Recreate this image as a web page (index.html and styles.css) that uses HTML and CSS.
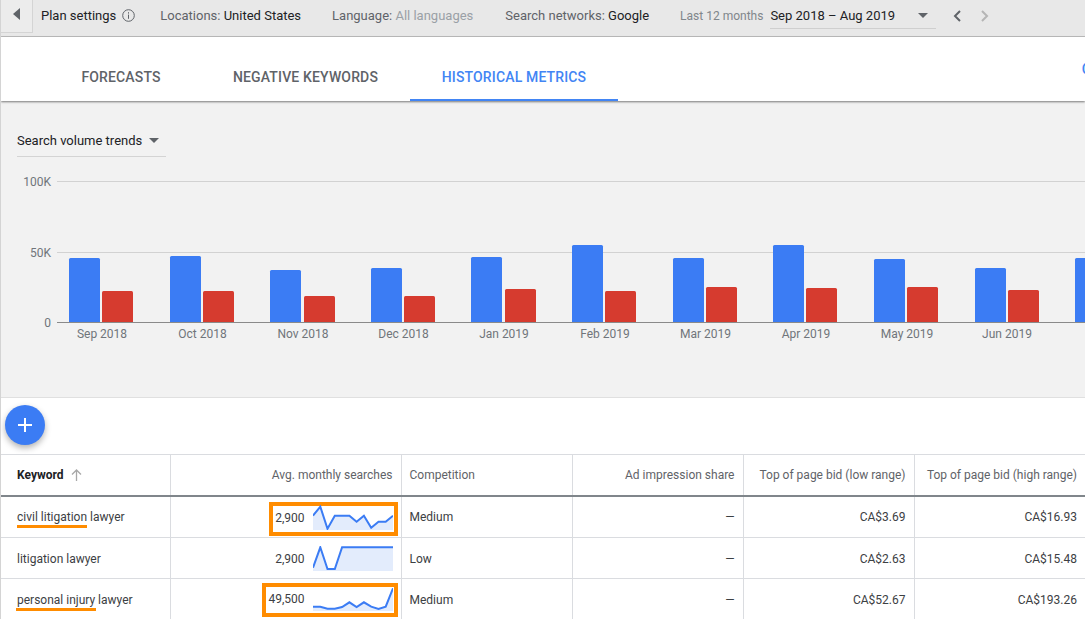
FILE: index.html
```html
<!DOCTYPE html>
<html lang="en">
<head>
  <meta charset="UTF-8">
  <meta name="viewport" content="width=device-width, initial-scale=1.0">
  <title>Historical metrics</title>
  <link rel="stylesheet" href="styles.css">
</head>
<body>
  <div class="page">
    <header class="settings-bar">
      <button class="back-btn" aria-label="Back">
        <svg width="7" height="12" viewBox="0 0 7 12"><path d="M7 0v12L0 6z" fill="#5f6368"/></svg>
      </button>
      <div class="plan-settings">
        <span>Plan settings</span>
        <svg width="13" height="13" viewBox="0 0 13 13" fill="none" stroke="#5f6368"><circle cx="6.5" cy="6.5" r="5.8"/><path d="M6.5 5.6v4.2M6.5 3.200v1.400"/></svg>
      </div>
      <div class="setting setting-loc">Locations: <b>United States</b></div>
      <div class="setting setting-lang">Language: <i>All languages</i></div>
      <div class="setting setting-net">Search networks: <b>Google</b></div>
      <div class="setting setting-range">Last 12 months</div>
      <div class="range-select">
        <span>Sep 2018 – Aug 2019</span>
        <span class="caret"></span>
      </div>
      <div class="pager">
        <svg width="8" height="12" viewBox="0 0 8 12" fill="none" stroke="#5f6368" stroke-width="2"><path d="M7 1L2 6l5 5"/></svg>
        <svg width="8" height="12" viewBox="0 0 8 12" fill="none" stroke="#b5b5b5" stroke-width="2"><path d="M1 1l5 5-5 5"/></svg>
      </div>
    </header>

    <nav class="tabs">
      <a class="tab tab-forecasts">FORECASTS</a>
      <a class="tab tab-negative">NEGATIVE KEYWORDS</a>
      <a class="tab tab-active">HISTORICAL METRICS</a>
      <a class="tab-action">C</a>
    </nav>

    <section class="chart-panel">
      <div class="trend-select">
        <span>Search volume trends</span>
        <span class="caret"></span>
      </div>
      <svg class="chart" width="1084" height="180" viewBox="0 0 1084 180">
        <g class="grid">
          <line x1="56" x2="1084" y1="9.5" y2="9.5"/>
          <line x1="56" x2="1084" y1="80.5" y2="80.5"/>
        </g>
        <g class="y-labels">
          <text x="50" y="14">100K</text>
          <text x="50" y="85">50K</text>
          <text x="50" y="155">0</text>
        </g>
        <g class="bars-blue">
          <rect x="68" y="86" width="31" height="65" rx="1.500"/>
          <rect x="169" y="84" width="31" height="67" rx="1.500"/>
          <rect x="269" y="98" width="31" height="53" rx="1.500"/>
          <rect x="370" y="96" width="31" height="55" rx="1.500"/>
          <rect x="470" y="85" width="31" height="66" rx="1.500"/>
          <rect x="571" y="73" width="31" height="78" rx="1.500"/>
          <rect x="672" y="86" width="31" height="65" rx="1.500"/>
          <rect x="772" y="73" width="31" height="78" rx="1.500"/>
          <rect x="873" y="87" width="31" height="64" rx="1.500"/>
          <rect x="974" y="96" width="31" height="55" rx="1.500"/>
          <rect x="1074" y="86" width="31" height="65" rx="1.500"/>
        </g>
        <g class="bars-red">
          <rect x="101" y="119" width="31" height="32" rx="1.500"/>
          <rect x="202" y="119" width="31" height="32" rx="1.500"/>
          <rect x="303" y="124" width="31" height="27" rx="1.500"/>
          <rect x="403" y="124" width="31" height="27" rx="1.500"/>
          <rect x="504" y="117" width="31" height="34" rx="1.500"/>
          <rect x="604" y="119" width="31" height="32" rx="1.500"/>
          <rect x="705" y="115" width="31" height="36" rx="1.500"/>
          <rect x="805" y="116" width="31" height="35" rx="1.500"/>
          <rect x="906" y="115" width="31" height="36" rx="1.500"/>
          <rect x="1007" y="118" width="31" height="33" rx="1.500"/>
        </g>
        <line class="axis" x1="56" x2="1084" y1="150.5" y2="150.5"/>
        <g class="x-labels">
          <text x="101" y="166">Sep 2018</text>
          <text x="201.500" y="166">Oct 2018</text>
          <text x="302" y="166">Nov 2018</text>
          <text x="402.500" y="166">Dec 2018</text>
          <text x="503" y="166">Jan 2019</text>
          <text x="604" y="166">Feb 2019</text>
          <text x="704.500" y="166">Mar 2019</text>
          <text x="805" y="166">Apr 2019</text>
          <text x="906" y="166">May 2019</text>
          <text x="1006" y="166">Jun 2019</text>
        </g>
      </svg>
    </section>

    <div class="fab-row">
      <button class="fab" aria-label="Add">
        <svg width="14" height="14" viewBox="0 0 14 14"><path d="M6 0h2v6h6v2H8v6H6V8H0V6h6z" fill="#fff"/></svg>
      </button>
    </div>

    <table class="metrics">
      <colgroup>
        <col class="col-keyword"><col class="col-searches"><col class="col-comp">
        <col class="col-share"><col class="col-low"><col class="col-high">
      </colgroup>
      <thead>
        <tr>
          <th class="th-keyword">Keyword
            <svg width="11" height="12" viewBox="0 0 11 12" fill="none" stroke="#a8a8a8" stroke-width="1.300"><path d="M5.500 12V1M1 5.500l4.500-4.500 4.500 4.500"/></svg>
          </th>
          <th class="num">Avg. monthly searches</th>
          <th>Competition</th>
          <th class="num">Ad impression share</th>
          <th class="num">Top of page bid (low range)</th>
          <th class="num">Top of page bid (high range)</th>
        </tr>
      </thead>
      <tbody>
        <tr>
          <td><span class="mark">civil litigation</span> lawyer</td>
          <td class="num searches">
            <div class="searches-box highlight">
              <span>2,900</span>
              <svg width="80" height="25" viewBox="0 0 80 25">
                <path class="spark-fill" d="M0 10.700L7.300 1.700 14.500 23.700 21.800 10.700 29.100 10.700 36.400 10.700 43.600 16.700 50.900 10.700 58.200 22.700 65.500 16.700 72.700 16.700 80 10.700V25H0z"/>
                <path class="spark-line" d="M0 10.700L7.300 1.700 14.500 23.700 21.800 10.700 29.100 10.700 36.400 10.700 43.600 16.700 50.900 10.700 58.200 22.700 65.500 16.700 72.700 16.700 80 10.700"/>
              </svg>
            </div>
          </td>
          <td>Medium</td>
          <td class="num">—</td>
          <td class="num">CA$3.69</td>
          <td class="num">CA$16.93</td>
        </tr>
        <tr>
          <td>litigation lawyer</td>
          <td class="num searches">
            <div class="searches-box">
              <span>2,900</span>
              <svg width="80" height="25" viewBox="0 0 80 25">
                <path class="spark-fill" d="M0 21.700L7.300 1.300 14.500 23 21.800 23 29.100 1.300 80 1.300V25H0z"/>
                <path class="spark-line" d="M0 21.700L7.300 1.300 14.500 23 21.800 23 29.100 1.300 80 1.300"/>
              </svg>
            </div>
          </td>
          <td>Low</td>
          <td class="num">—</td>
          <td class="num">CA$2.63</td>
          <td class="num">CA$15.48</td>
        </tr>
        <tr>
          <td><span class="mark mark-wide">personal injury</span> lawyer</td>
          <td class="num searches">
            <div class="searches-box highlight highlight-last">
              <span>49,500</span>
              <svg width="80" height="25" viewBox="0 0 80 25">
                <path class="spark-fill" d="M0 20.700L7.300 20.700 14.500 22.700 21.800 22.700 29.100 21 36.400 16.300 43.600 21 50.900 16.300 58.200 20.700 65.500 23 72.700 20.700 80 2.300V25H0z"/>
                <path class="spark-line" d="M0 20.700L7.300 20.700 14.500 22.700 21.800 22.700 29.100 21 36.400 16.300 43.600 21 50.900 16.300 58.200 20.700 65.500 23 72.700 20.700 80 2.300"/>
              </svg>
            </div>
          </td>
          <td>Medium</td>
          <td class="num">—</td>
          <td class="num">CA$52.67</td>
          <td class="num">CA$193.26</td>
        </tr>
      </tbody>
    </table>
  </div>
</body>
</html>
```

FILE: styles.css
```css
html, body {
  margin: 0;
  padding: 0;
  height: 100%;
  overflow: hidden;
  background-color: #fff;
}
body {
  font-family: Roboto, "Liberation Sans", sans-serif;
  color: #202124;
}
.page {
  width: 1085px;
  height: 619px;
  overflow: hidden;
  border-left: 1px solid #d4d4d4;
  box-sizing: border-box;
}

/* top settings bar */
.settings-bar {
  display: flex;
  align-items: center;
  height: 37px;
  padding-bottom: 5px;
  box-sizing: border-box;
  background-color: #e8e8e8;
  border-bottom: 1px solid #bdbdbd;
  font-size: 13px;
  color: #5f6368;
  white-space: nowrap;
}
.back-btn {
  display: flex;
  align-items: center;
  justify-content: center;
  align-self: flex-start;
  width: 32px;
  height: 33px;
  margin: 0 8px 0 0;
  padding: 0 0 5px;
  box-sizing: border-box;
  background-color: #ececec;
  border: 0;
  border-right: 1px solid #d4d4d4;
  border-bottom: 1px solid #d4d4d4;
}
.plan-settings {
  display: flex;
  align-items: center;
  gap: 6px;
  color: #202124;
}
.setting b {
  font-weight: 400;
  color: #202124;
}
.setting i {
  font-style: normal;
  color: #9aa0a6;
}
.setting-loc { margin-left: 25px; }
.setting-lang { margin-left: 31px; }
.setting-net { margin-left: 32px; }
.setting-range { margin-left: 31px; font-size: 12px; color: #80868b; }
.range-select {
  display: flex;
  align-items: center;
  justify-content: space-between;
  width: 166px;
  height: 27px;
  margin-left: 7px;
  padding-right: 8px;
  box-sizing: border-box;
  border-bottom: 1px solid #cfcfcf;
  color: #202124;
}
.caret {
  width: 0;
  height: 0;
  border-left: 5px solid transparent;
  border-right: 5px solid transparent;
  border-top: 5px solid #5f6368;
}
.pager {
  display: flex;
  gap: 20px;
  margin-left: 17px;
}

/* tabs */
.tabs {
  display: flex;
  position: relative;
  z-index: 1;
  height: 64px;
  background-color: #fff;
  box-shadow: 0 1px 2px rgba(0, 0, 0, 0.5);
  font-size: 14px;
  font-weight: 500;
  color: #5f6368;
}
.tab {
  display: flex;
  align-items: center;
  justify-content: center;
  box-sizing: border-box;
  height: 64px;
  padding-top: 16px;
  letter-spacing: 0.15px;
}
.tab-forecasts { width: 200px; padding-left: 40px; }
.tab-negative { width: 209px; }
.tab-active {
  width: 208px;
  color: #4285f4;
  border-bottom: 2px solid #4285f4;
  padding-top: 18px;
}
.tab-action {
  margin-left: auto;
  margin-right: -6px;
  padding-top: 24px;
  color: #4285f4;
}

/* chart */
.chart-panel {
  height: 297px;
  padding-top: 24px;
  box-sizing: border-box;
  background-color: #f2f2f2;
  border-bottom: 1px solid #e0e0e0;
}
.trend-select {
  display: flex;
  align-items: center;
  gap: 7px;
  width: 149px;
  height: 32px;
  margin-left: 16px;
  padding-bottom: 1px;
  box-sizing: border-box;
  border-bottom: 1px solid #d4d4d4;
  font-size: 13px;
  color: #202124;
}
.chart {
  display: block;
  margin-top: 15px;
  font-size: 12px;
}
.grid line { stroke: #d2d2d2; }
.axis { stroke: #8a8a8a; }
.y-labels text { fill: #70757a; text-anchor: end; }
.x-labels text { fill: #70757a; text-anchor: middle; }
.bars-blue rect { fill: #3b7cf4; }
.bars-red rect { fill: #d63b2f; }

/* add button */
.fab-row {
  height: 56px;
  padding: 7px 0 0 4px;
  box-sizing: border-box;
}
.fab {
  display: flex;
  align-items: center;
  justify-content: center;
  width: 40px;
  height: 40px;
  padding: 0;
  border: 0;
  border-radius: 50%;
  background-color: #3b7cf4;
  box-shadow: 0 3px 6px rgba(0, 0, 0, 0.3);
}

/* table */
.metrics {
  width: 1084px;
  table-layout: fixed;
  border-collapse: collapse;
  font-size: 12px;
  color: #3c4043;
}
.col-keyword { width: 169px; }
.col-searches { width: 231px; }
.col-comp { width: 171px; }
.col-share { width: 171px; }
.col-low { width: 171px; }
.col-high { width: 171px; }
.metrics th {
  height: 41px;
  padding: 0 8px;
  box-sizing: border-box;
  text-align: left;
  font-weight: 400;
  color: #5f6368;
  border-top: 1px solid #dadce0;
  border-left: 1px solid #dadce0;
  border-bottom: 2px solid #80868b;
  white-space: nowrap;
}
.metrics th:first-child,
.metrics td:first-child {
  border-left: 0;
  padding-left: 16px;
}
.metrics th.th-keyword {
  font-weight: 700;
  color: #202124;
}
.th-keyword svg {
  margin-left: 4px;
  vertical-align: -2px;
}
.metrics td {
  height: 41px;
  padding: 1px 8px 0;
  box-sizing: border-box;
  border-left: 1px solid #dadce0;
  border-bottom: 1px solid #dadce0;
  white-space: nowrap;
}
.metrics tbody tr:first-child td { height: 42px; }
.metrics .num { text-align: right; }
.metrics td.searches { padding: 0 3px 0 0; }
.mark {
  border-bottom: 3px solid #ff8c00;
  padding-bottom: 1px;
}
.mark-wide {
  margin: 0 -1px;
  padding: 0 1px 1px;
}
.searches-box {
  display: inline-flex;
  align-items: center;
  gap: 8px;
  height: 34px;
  margin-top: 4px;
  box-sizing: border-box;
  padding: 0 1px 0 2px;
  border: 4px solid transparent;
  vertical-align: middle;
}
.searches-box.highlight { border-color: #ff8c00; }
.searches-box.highlight-last { margin-top: 2px; }
.searches-box span { margin-bottom: 2px; }
.searches-box svg { display: block; margin-bottom: 3px; }
.spark-fill { fill: #e3ecfc; }
.spark-line {
  fill: none;
  stroke: #3b7cf4;
  stroke-width: 2;
}
```
